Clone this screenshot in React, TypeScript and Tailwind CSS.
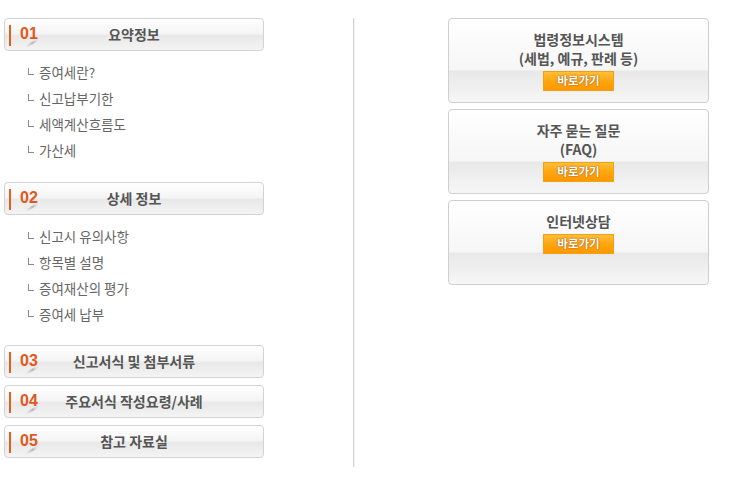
const SUMMARY_ITEMS = ['증여세란?', '신고납부기한', '세액계산흐름도', '가산세'];
const DETAIL_ITEMS = ['신고시 유의사항', '항목별 설명', '증여재산의 평가', '증여세 납부'];

const LINKS: { lines: string[] }[] = [
    { lines: ['법령정보시스템', '(세법, 예규, 판례 등)'] },
    { lines: ['자주 묻는 질문', '(FAQ)'] },
    { lines: ['인터넷상담'] },
];

function SectionHeader({ num, title }: { num: string; title: string }) {
    return (
        <div className="relative flex h-[33px] items-center rounded-[4px] border border-[#d2d2d2] bg-[linear-gradient(to_bottom,#ffffff_0%,#f5f5f5_46%,#e8e8e8_54%,#f4f4f4_100%)]">
            <span className="absolute left-[4px] top-[6px] h-[21px] w-[2px] bg-[#e0601f]" />
            <span className="absolute left-[15px] top-[7px] font-['Liberation_Sans',Arial,sans-serif] text-[16px] font-bold leading-[16px] text-[#e0581a]">
                {num}
            </span>
            <svg className="absolute left-[19px] top-[19px]" width="16" height="10" viewBox="0 0 16 10">
                <defs>
                    <linearGradient id={`sh${num}`} x1="0" y1="1" x2="1" y2="0">
                        <stop offset="0" stopColor="#c8c8c8" stopOpacity="0" />
                        <stop offset="0.6" stopColor="#b0b0b0" stopOpacity="0.9" />
                        <stop offset="1" stopColor="#c8c8c8" stopOpacity="0.2" />
                    </linearGradient>
                </defs>
                <path d="M2 9 L13 2" stroke={`url(#sh${num})`} strokeWidth="2.2" strokeLinecap="round" />
            </svg>
            <span className="w-full text-center text-[14px] font-bold text-[#555]">{title}</span>
        </div>
    );
}

function SubList({ items }: { items: string[] }) {
    return (
        <ul className="mt-[8px] pl-[24px]">
            {items.map((item) => (
                <li key={item} className="flex h-[26px] items-center text-[13.5px] text-[#666]">
                    <span className="mr-[5px] mb-[2px] h-[7px] w-[6px] border-b border-l border-[#8a8a8a]" />
                    {item}
                </li>
            ))}
        </ul>
    );
}

function GoButton() {
    return (
        <button className="mx-auto mt-[3px] flex h-[20px] w-[71px] items-center justify-center border border-[#f0a010] bg-[linear-gradient(to_bottom,#ffbe3a_0%,#ffa60f_50%,#ff9800_100%)] text-[11.5px] font-bold text-white [text-shadow:0_0_2px_#b85c00,0_0_1px_#b85c00]">
            바로가기
        </button>
    );
}

export default function App() {
    return (
        <div className="flex h-[484px] w-[733px] bg-white pt-[18px] font-['Noto_Sans_CJK_KR','Noto_Sans',sans-serif]">
            <div className="ml-[4px] w-[260px]">
                <SectionHeader num="01" title="요약정보" />
                <SubList items={SUMMARY_ITEMS} />
                <div className="mt-[19px]">
                    <SectionHeader num="02" title="상세 정보" />
                </div>
                <SubList items={DETAIL_ITEMS} />
                <div className="mt-[18px] flex flex-col gap-[7px]">
                    <SectionHeader num="03" title="신고서식 및 첨부서류" />
                    <SectionHeader num="04" title="주요서식 작성요령/사례" />
                    <SectionHeader num="05" title="참고 자료실" />
                </div>
            </div>

            <div className="ml-[89px] flex h-[449px]">
                <div className="w-px bg-[#d4d4d4]" />
                <div className="w-px bg-[#f1f1f1]" />
            </div>

            <div className="ml-[93px] flex w-[261px] flex-col gap-[6px]">
                {LINKS.map((link) => (
                    <div
                        key={link.lines[0]}
                        className="h-[85px] rounded-[4px] border border-[#cfcfcf] bg-[linear-gradient(to_bottom,#ffffff_0px,#f6f6f6_51px,#e8e8e8_52px,#f1f1f1_72px,#f6f6f6_100%)] pt-[11px] text-center"
                    >
                        {link.lines.map((line) => (
                            <div key={line} className="text-[14px] font-bold leading-[19px] text-[#555]">
                                {line}
                            </div>
                        ))}
                        <GoButton />
                    </div>
                ))}
            </div>
        </div>
    );
}
